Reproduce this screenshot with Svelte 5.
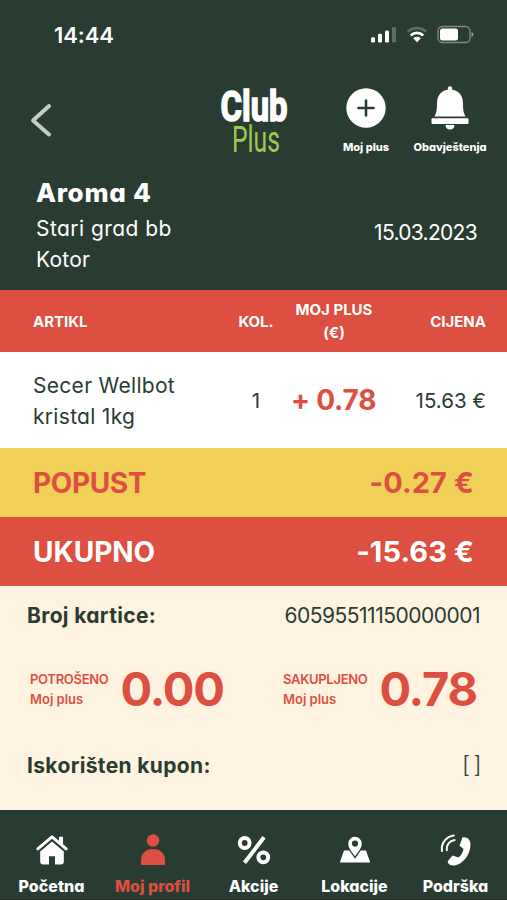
<script>
  const columns = ["ARTIKL", "KOL.", "MOJ PLUS (€)", "CIJENA"];

  let receipt = {
    store: "Aroma 4",
    address: "Stari grad bb",
    city: "Kotor",
    date: "15.03.2023",
    items: [{ name: "Secer Wellbot kristal 1kg", qty: 1, plus: "+ 0.78", price: "15.63 €" }],
    discount: "-0.27 €",
    total: "-15.63 €",
    card: "60595511150000001",
    coupon: "[ ]",
  };

  let points = [
    { id: "spent", label: "POTROŠENO", value: "0.00" },
    { id: "earned", label: "SAKUPLJENO", value: "0.78" },
  ];

  let active = "profile";
  const tabs = [
    { id: "home", label: "Početna" },
    { id: "profile", label: "Moj profil" },
    { id: "offers", label: "Akcije" },
    { id: "places", label: "Lokacije" },
    { id: "support", label: "Podrška" },
  ];
</script>

<div class="screen">
  <header>
    <div class="status">
      <span class="time">14:44</span>
      <svg class="system" width="104" height="20" viewBox="0 0 104 20" fill="#fff">
        <rect x="1" y="12.3" width="4" height="5.2" rx="1.2" />
        <rect x="8" y="8.7" width="4" height="8.8" rx="1.2" />
        <rect x="15" y="5.5" width="4" height="12" rx="1.2" />
        <rect x="22" y="2" width="4" height="15.5" rx="1.2" opacity=".25" />
        <g fill="none" stroke="#fff" stroke-width="2.8">
          <path d="M37.8 6.7a13.5 13.5 0 0 1 18.4 0" opacity=".25" />
          <path d="M40.8 10.4a9 9 0 0 1 12.4 0" />
        </g>
        <path d="M43.2 13.3a5.6 5.6 0 0 1 7.6 0L47 17.3z" />
        <rect x="68" y="1.5" width="32" height="16" rx="4.5" fill="none" stroke="#fff" stroke-width="1.3" opacity=".4" />
        <rect x="70" y="3.5" width="18" height="12" rx="2.5" />
        <path d="M101.5 7a2.6 2.6 0 0 1 0 5z" opacity=".5" />
      </svg>
    </div>

    <div class="topbar">
      <button class="back" aria-label="Nazad">
        <svg width="24" height="36" viewBox="0 0 24 36">
          <path d="M21 4 5 18.5 21 32.5" fill="none" stroke="#c5cbc6" stroke-width="4" stroke-linecap="round" stroke-linejoin="round" />
        </svg>
      </button>
      <svg class="logo" width="72" height="70" viewBox="0 0 72 70">
        <text class="club" x="2.5" y="34.5" textLength="67" lengthAdjust="spacingAndGlyphs">Club</text>
        <text class="plus" x="14" y="66" textLength="48" lengthAdjust="spacingAndGlyphs">Plus</text>
      </svg>
      <button class="action my-plus">
        <svg width="40" height="40" viewBox="0 0 40 40">
          <circle cx="20" cy="20" r="19.7" fill="#fff" />
          <path d="M20 12.5v15M12.5 20h15" stroke="#293c32" stroke-width="2.6" stroke-linecap="round" />
        </svg>
        <span>Moj plus</span>
      </button>
      <button class="action notify">
        <svg width="40" height="44" viewBox="0 0 40 44" fill="#fff">
          <circle cx="20" cy="2.5" r="2.2" />
          <path d="M20 3.5c8 0 13 5.5 13 14 0 8 1 10 2.6 13H4.4C6 27.5 7 25.5 7 17.5c0-8.5 5-14 13-14z" />
          <rect x="1.5" y="32.3" width="37" height="5.7" rx="1" />
          <path d="M15.5 39h9c0 3-2 4.6-4.5 4.6S15.5 42 15.5 39z" />
        </svg>
        <span>Obavještenja</span>
      </button>
    </div>

    <div class="store">
      <div>
        <h1>{receipt.store}</h1>
        <p class="address">{receipt.address}</p>
        <p class="city">{receipt.city}</p>
      </div>
      <span class="date">{receipt.date}</span>
    </div>
  </header>

  <div class="row head">
    {#each columns as column}
      <span>{column}</span>
    {/each}
  </div>

  {#each receipt.items as item}
    <div class="row item">
      <span class="name">{item.name}</span>
      <span class="qty">{item.qty}</span>
      <span class="gain">{item.plus}</span>
      <span class="price">{item.price}</span>
    </div>
  {/each}

  <div class="sum discount">
    <span>POPUST</span>
    <span class="amount">{receipt.discount}</span>
  </div>
  <div class="sum total">
    <span>UKUPNO</span>
    <span class="amount">{receipt.total}</span>
  </div>

  <section>
    <div class="line">
      <b>Broj kartice:</b>
      <span class="number">{receipt.card}</span>
    </div>
    <div class="points">
      {#each points as point}
        <div class="point">
          <div class="caption">
            <span class="kind">{point.label}</span>
            <span>Moj plus</span>
          </div>
          <strong>{point.value}</strong>
        </div>
      {/each}
    </div>
    <div class="line">
      <b>Iskorišten kupon:</b>
      <span class="coupon">{receipt.coupon}</span>
    </div>
  </section>

  <nav>
    {#each tabs as tab}
      <button class="tab" class:active={tab.id === active} on:click={() => (active = tab.id)}>
        <svg width="36" height="36" viewBox="0 0 36 36" fill="currentColor">
          {#if tab.id === "home"}
            <path d="M3.8 16.8 18 4.8l14.2 12" fill="none" stroke="currentColor" stroke-width="3" stroke-linecap="round" stroke-linejoin="round" />
            <path d="M25 4.8h4v9l-4-3.6z" />
            <path d="M18 9.5 29.8 19.5v10a3 3 0 0 1-3 3H21v-8.3h-6v8.3H9.2a3 3 0 0 1-3-3v-10z" />
          {:else if tab.id === "profile"}
            <circle cx="18" cy="8.5" r="6.2" />
            <path d="M6 33v-4.5C6 21.5 10.500 17 18 17s12 4.500 12 11.500V33z" />
          {:else if tab.id === "offers"}
            <g fill="none" stroke="currentColor" stroke-width="4">
              <circle cx="8.7" cy="11" r="4.9" />
              <circle cx="27.3" cy="25.3" r="4.9" />
              <path d="M28 5.2 8.5 30.800" />
            </g>
          {:else if tab.id === "places"}
            <path d="M7 18.5h5.2l5.8 8.2 5.8-8.2H29l4.2 12H2.8z" />
            <path fill-rule="evenodd" d="M18 4.8a6.7 6.7 0 0 1 6.7 6.7c0 4.5-3 7.8-6.7 12.8-3.700-5-6.700-8.300-6.700-12.800A6.700 6.700 0 0 1 18 4.800zm0 3.700a3.100 3.100 0 1 0 0 6.200 3.100 3.100 0 0 0 0-6.200z" />
          {:else}
            <path d="M24.500 5.300c4.500-.8 8 2 8 7.200C32.500 23 24 33.500 15 33.500c-3 0-5-1.800-5.400-4.100l4.900-6 6 2.200c2.700-2 4.600-5.500 5-8.600l-4-3.200z" />
            <path d="M4 19C2.800 11.500 8.300 4.300 15.800 3.400M8.800 18.200C8 13 11.600 8.600 16.600 8" fill="none" stroke="currentColor" stroke-width="2" stroke-linecap="round" />
          {/if}
        </svg>
        <span>{tab.label}</span>
      </button>
    {/each}
  </nav>
</div>

<style>
  :global(body) {
    margin: 0;
  }

  .screen {
    width: 507px;
    height: 900px;
    overflow: hidden;
    display: flex;
    flex-direction: column;
    font-family: Inter, "Open Sans", sans-serif;
    font-feature-settings: "cv11", "kern";
    color: #293c32;
    background: #293c32;
    white-space: nowrap;
  }

  h1,
  p {
    margin: 0;
  }

  button {
    padding: 0;
    border: 0;
    background: none;
    color: #fff;
    font: inherit;
    font-feature-settings: inherit;
  }

  svg {
    display: block;
  }

  header {
    height: 290px;
    box-sizing: border-box;
    color: #fff;
  }

  .status {
    height: 70px;
    box-sizing: border-box;
    padding: 0 33px 0 54px;
    display: flex;
    align-items: center;
    justify-content: space-between;
  }

  .time {
    font-size: 22px;
    font-weight: 600;
    line-height: 26px;
    letter-spacing: -0.1px;
  }

  .topbar {
    height: 94px;
    display: grid;
    grid-template-columns: 218px 72px 34px 84px 84px;
    align-items: start;
    padding-top: 12px;
    box-sizing: border-box;
  }

  .back {
    justify-self: start;
    margin: 20px 0 0 28px;
  }

  .logo {
    margin-top: 4px;
    overflow: visible;
  }

  .club {
    font: 700 42px Roboto, sans-serif;
    fill: #fff;
    stroke: #fff;
    stroke-width: 1.6px;
  }

  .plus {
    font: 400 36px Roboto, sans-serif;
    fill: #9fc851;
  }

  .action {
    display: flex;
    flex-direction: column;
    align-items: center;
    height: 73px;
    justify-content: space-between;
    font-size: 11px;
    font-weight: 800;
    line-height: 16px;
  }

  .my-plus {
    grid-column: 4;
    padding-top: 6px;
    box-sizing: border-box;
  }

  .notify {
    padding-top: 4px;
    box-sizing: border-box;
  }

  .store {
    display: flex;
    justify-content: space-between;
    padding: 11px 30px 0 36px;
    font-size: 21px;
    line-height: 31px;
  }

  h1 {
    font-size: 26px;
    font-weight: 800;
    line-height: 36px;
    letter-spacing: 0.7px;
    padding-bottom: 2px;
  }

  .address {
    letter-spacing: 0.45px;
  }

  .city {
    letter-spacing: 0.2px;
  }

  .date {
    margin-top: 42px;
    letter-spacing: -0.7px;
  }

  .row {
    display: grid;
    grid-template-columns: 186px 74px 82px 1fr;
    align-items: center;
    text-align: center;
    padding: 0 21px 0 33px;
    box-sizing: border-box;
  }

  .row > :first-child {
    text-align: left;
  }

  .row > :last-child {
    text-align: right;
  }

  .head {
    height: 62px;
    background: #dd4f40;
    color: #fff;
    font-size: 15px;
    font-weight: 700;
    line-height: 23px;
    white-space: normal;
  }

  .item {
    height: 96px;
    padding-top: 1px;
    background: #fff;
    font-size: 20.5px;
    line-height: 31px;
  }

  .name {
    width: 170px;
    font-size: 21px;
    letter-spacing: 0.3px;
    white-space: normal;
  }

  .gain {
    color: #dd4f40;
    font-size: 28px;
    font-weight: 700;
    letter-spacing: -0.2px;
    margin-left: -2px;
  }

  .sum {
    height: 69px;
    box-sizing: border-box;
    padding: 0 33px;
    display: flex;
    align-items: center;
    justify-content: space-between;
    font-size: 28px;
    font-weight: 700;
  }

  .discount {
    background: #f0d056;
    color: #dd4f40;
    letter-spacing: -0.4px;
  }

  .total {
    background: #dd4f40;
    color: #fff;
  }

  .amount {
    font-size: 29px;
    letter-spacing: 0.1px;
  }

  section {
    height: 224px;
    box-sizing: border-box;
    padding: 0 27px;
    background: #fef3e0;
  }

  .line {
    height: 58px;
    display: flex;
    align-items: center;
    justify-content: space-between;
    font-size: 21px;
  }

  .line b {
    font-weight: 700;
    letter-spacing: 0.35px;
  }

  .number {
    letter-spacing: -0.5px;
  }

  .coupon {
    font-size: 23px;
    font-weight: 300;
    letter-spacing: -1.5px;
  }

  .points {
    height: 90px;
    padding-bottom: 2px;
    display: grid;
    grid-template-columns: 253px 1fr;
    align-items: center;
    padding-left: 3px;
    color: #dd4f40;
  }

  .point {
    display: flex;
    align-items: center;
    gap: 12px;
  }

  .caption {
    display: flex;
    flex-direction: column;
    font-size: 13px;
    font-weight: 600;
    line-height: 20px;
  }

  .kind {
    letter-spacing: -0.3px;
  }

  strong {
    font-size: 47px;
    line-height: 56px;
    letter-spacing: -1.2px;
  }

  nav {
    height: 90px;
    display: grid;
    grid-template-columns: repeat(5, 101px);
    padding: 22px 0 0 1px;
    box-sizing: border-box;
    border-bottom: 1px solid #1c2924;
  }

  .tab {
    display: flex;
    flex-direction: column;
    align-items: center;
    font-size: 16px;
    font-weight: 800;
    line-height: 20px;
    gap: 8px;
  }

  .tab.active {
    color: #dd4f40;
  }
</style>
